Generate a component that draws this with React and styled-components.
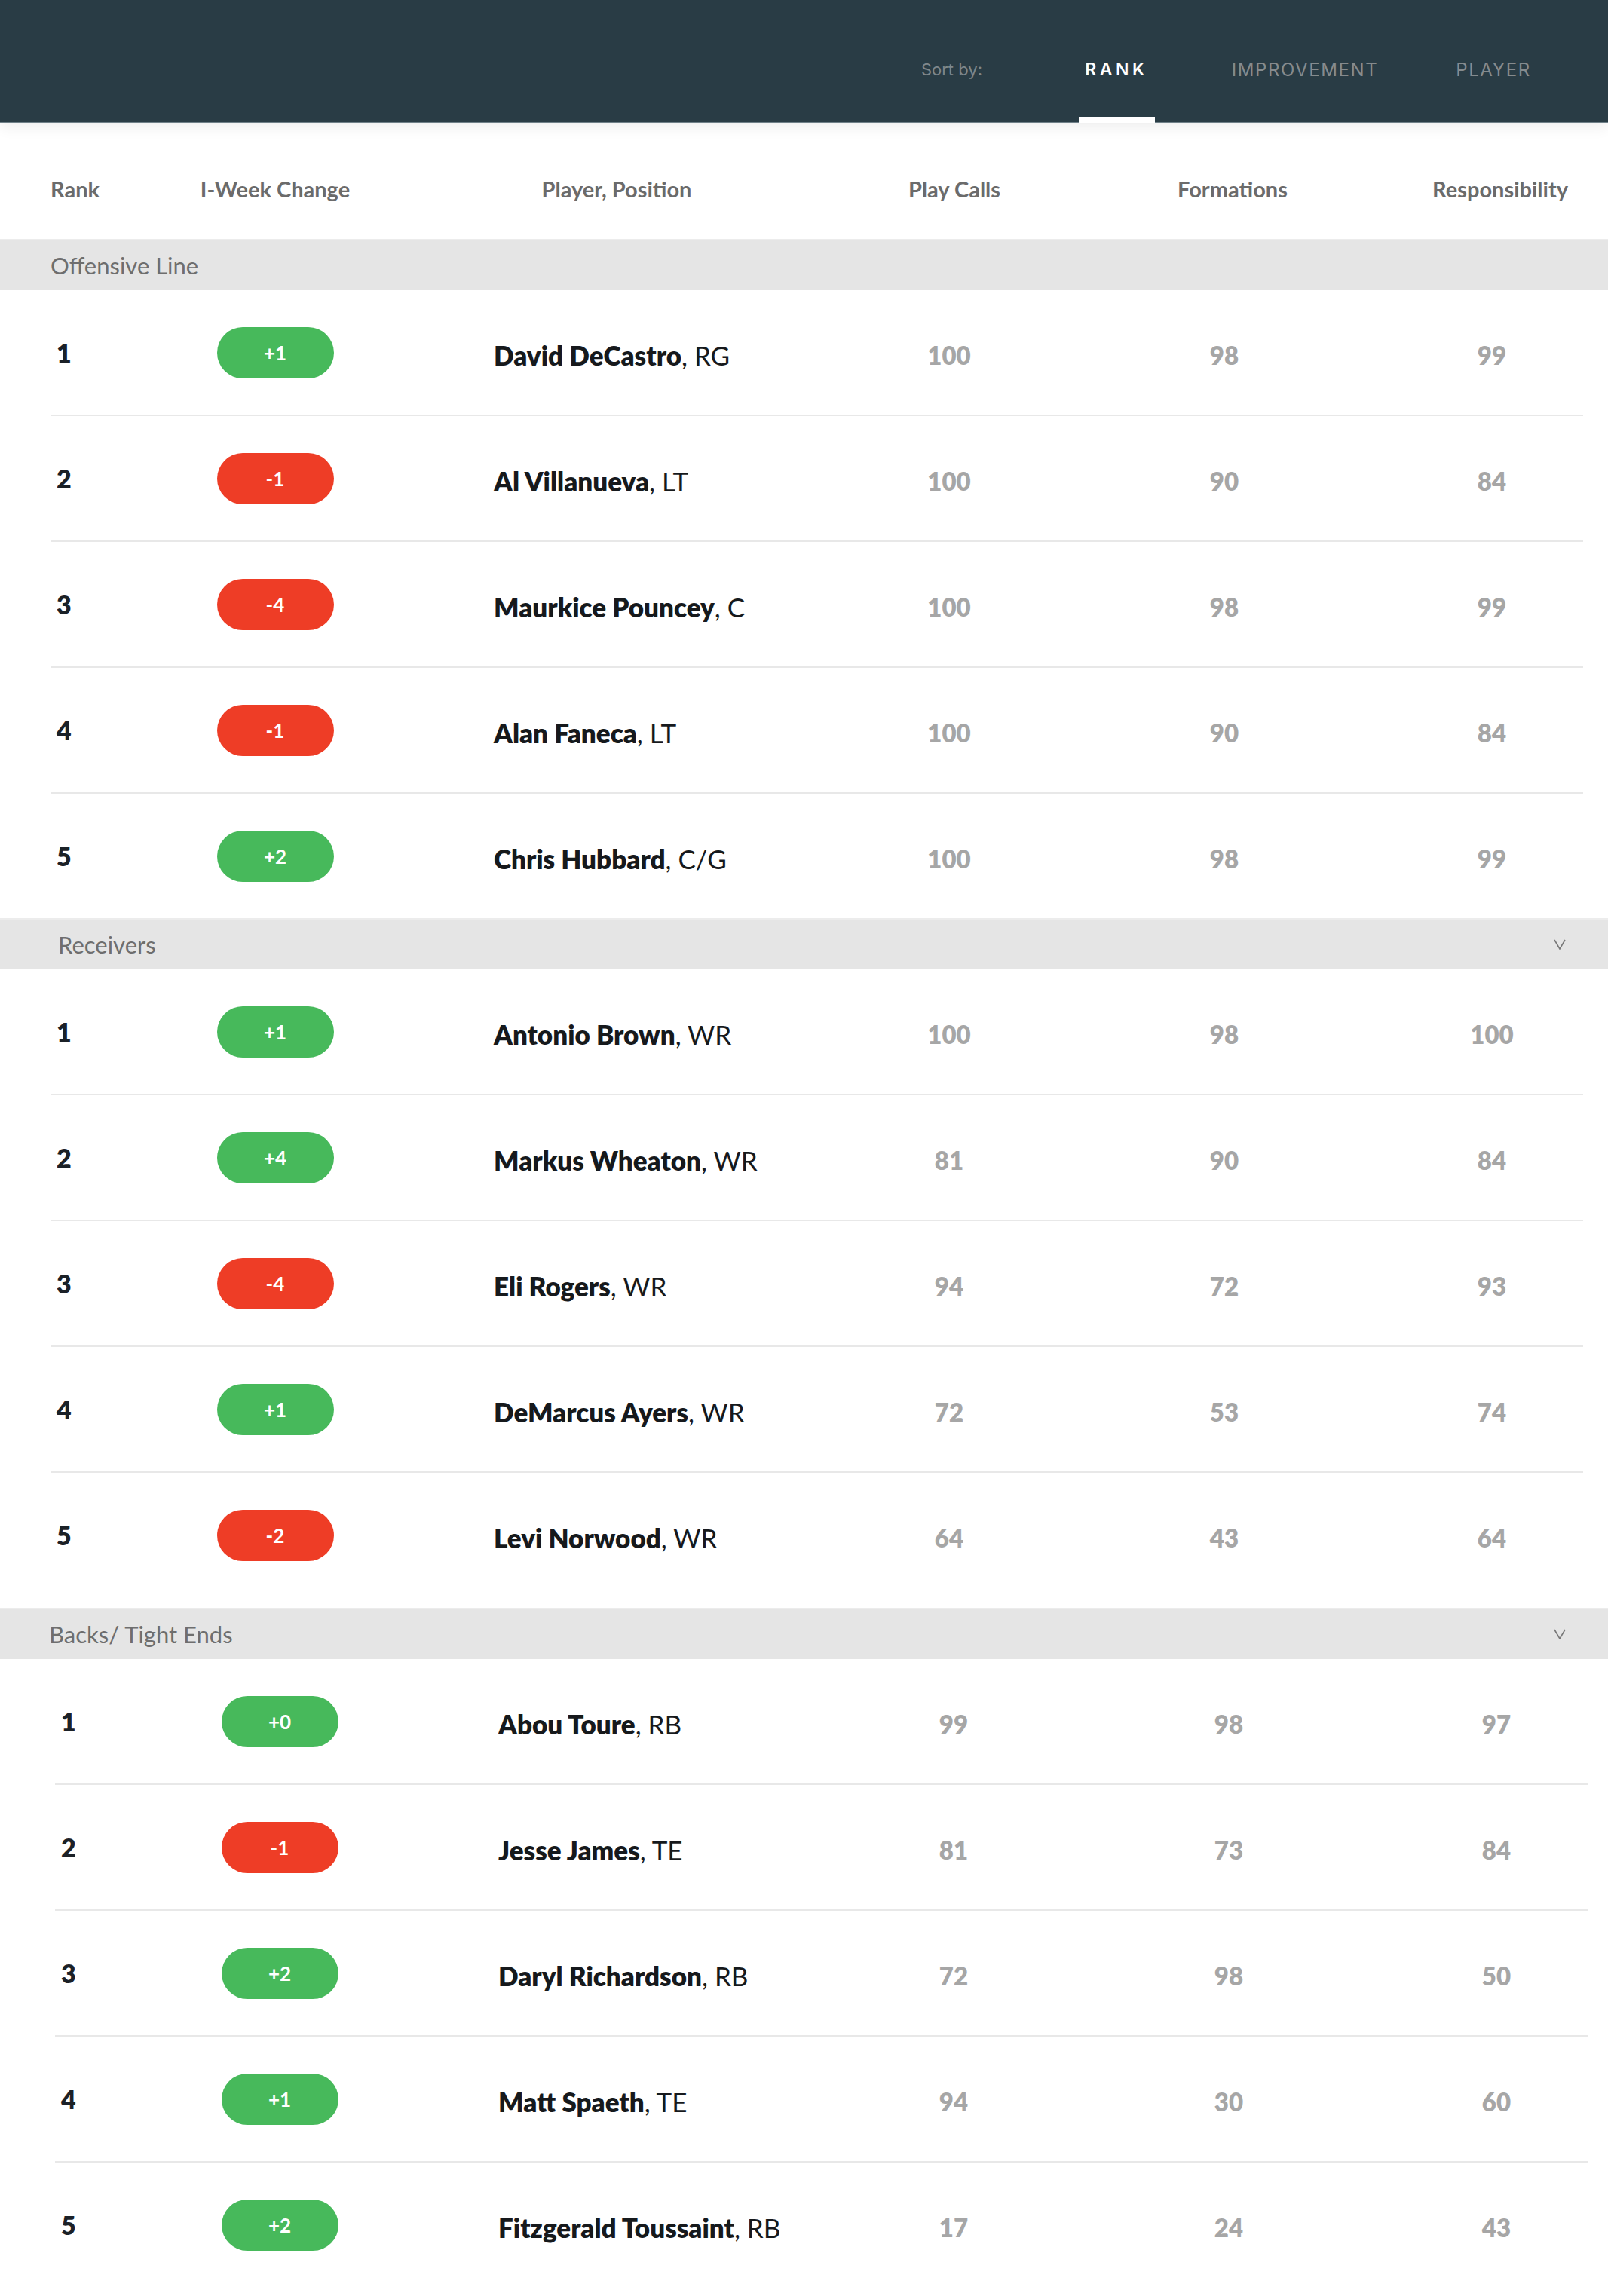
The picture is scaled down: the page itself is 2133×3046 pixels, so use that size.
import React from "react";
import styled, { createGlobalStyle } from "styled-components";

const GlobalStyle = createGlobalStyle`
  body {
    margin: 0;
    background: #fff;
    font-family: Lato, "Liberation Sans", sans-serif;
  }
`;

const TopBar = styled.header`
  position: relative;
  z-index: 2;
  height: 163px;
  background: #293c45;
  border-bottom: 1px solid #6f8088;
  box-sizing: border-box;
  box-shadow: 0 6px 18px rgba(0, 0, 0, 0.07);
  display: flex;
  justify-content: flex-end;
  align-items: stretch;
  padding-right: 27px;
  font-family: Inter, "Liberation Sans", sans-serif;
`;

const SortLabel = styled.span`
  align-self: center;
  margin-right: 53px;
  margin-top: 22px;
  font-size: 22px;
  color: #7f878b;
`;

const Tab = styled.div`
  position: relative;
  width: 250px;
  display: flex;
  align-items: center;
  justify-content: center;
  padding-top: 22px;
  box-sizing: border-box;
  font-size: ${({ active }) => (active ? "23px" : "24px")};
  letter-spacing: ${({ active }) => (active ? "4.5px" : "1.6px")};
  font-weight: ${({ active }) => (active ? 600 : 400)};
  color: ${({ active }) => (active ? "#fff" : "#858b8e")};

  &::after {
    content: "";
    display: ${({ active }) => (active ? "block" : "none")};
    position: absolute;
    bottom: -1px;
    left: 50%;
    width: 101px;
    height: 8px;
    margin-left: -50px;
    background: #fff;
  }
`;

const cols = "143px 310px 560px 358px 372px 290px";

const HeadRow = styled.div`
  display: grid;
  grid-template-columns: ${cols};
  align-items: center;
  height: 154px;
  padding-top: 20px;
  margin-left: 67px;
  box-sizing: border-box;
`;

const HeadCell = styled.div`
  font-size: 29px;
  font-weight: 700;
  color: #6b6b6b;
  white-space: nowrap;
  text-align: ${({ left }) => (left ? "left" : "center")};
  padding-left: ${({ offset }) => offset || 0}px;
`;

const Band = styled.div`
  height: 68px;
  background: #e5e5e5;
  border-top: 2px solid #ececec;
  box-sizing: border-box;
  display: flex;
  align-items: center;
  justify-content: space-between;
  padding-left: ${({ indent }) => indent}px;
  padding-right: 56px;
  font-size: 31px;
  color: #6e6e6e;
`;

const Section = styled.section`
  padding-bottom: ${({ tail }) => tail}px;
`;

const Row = styled.div`
  display: grid;
  grid-template-columns: ${cols};
  align-items: center;
  height: 165px;
  margin-left: ${({ shift }) => 67 + shift}px;
  width: 2033px;
  border-bottom: 2px solid #e8e8e8;

  &:last-child {
    border-bottom: none;
  }
`;

const RankNum = styled.div`
  padding-left: 8px;
  font-size: 34px;
  font-weight: 800;
  color: #1b2127;
`;

const ChangeCell = styled.div`
  display: flex;
  justify-content: center;
`;

const Badge = styled.span`
  width: 155px;
  height: 68px;
  border-radius: 34px;
  display: flex;
  align-items: center;
  justify-content: center;
  background: ${({ up }) => (up ? "#47b95b" : "#ee3d26")};
  color: #fff;
  font-size: 26px;
  font-weight: 700;
`;

const PlayerCell = styled.div`
  padding-left: 135px;
  padding-top: 6px;
  font-size: 35px;
  color: #16191c;
  white-space: nowrap;

  b {
    font-weight: 800;
  }
`;

const Value = styled.div`
  text-align: center;
  padding-top: 6px;
  padding-left: ${({ offset }) => offset || 0}px;
  font-size: 33px;
  font-weight: 800;
  color: #a6a6a6;
`;

const Chevron = () => (
  <svg width="16" height="14" viewBox="0 0 16 14">
    <polyline points="1,1 8,13 15,1" fill="none" stroke="#777" strokeWidth="1.6" />
  </svg>
);

const sections = [
  {
    title: "Offensive Line",
    indent: 67,
    shift: 0,
    tail: 0,
    chevron: false,
    rows: [
      [1, "+1", "David DeCastro", "RG", 100, 98, 99],
      [2, "-1", "Al Villanueva", "LT", 100, 90, 84],
      [3, "-4", "Maurkice Pouncey", "C", 100, 98, 99],
      [4, "-1", "Alan Faneca", "LT", 100, 90, 84],
      [5, "+2", "Chris Hubbard", "C/G", 100, 98, 99],
    ],
  },
  {
    title: "Receivers",
    indent: 77,
    shift: 0,
    tail: 14,
    chevron: true,
    rows: [
      [1, "+1", "Antonio Brown", "WR", 100, 98, 100],
      [2, "+4", "Markus Wheaton", "WR", 81, 90, 84],
      [3, "-4", "Eli Rogers", "WR", 94, 72, 93],
      [4, "+1", "DeMarcus Ayers", "WR", 72, 53, 74],
      [5, "-2", "Levi Norwood", "WR", 64, 43, 64],
    ],
  },
  {
    title: "Backs/ Tight Ends",
    indent: 65,
    shift: 6,
    tail: 12,
    chevron: true,
    rows: [
      [1, "+0", "Abou Toure", "RB", 99, 98, 97],
      [2, "-1", "Jesse James", "TE", 81, 73, 84],
      [3, "+2", "Daryl Richardson", "RB", 72, 98, 50],
      [4, "+1", "Matt Spaeth", "TE", 94, 30, 60],
      [5, "+2", "Fitzgerald Toussaint", "RB", 17, 24, 43],
    ],
  },
];

export default function App() {
  return (
    <>
      <GlobalStyle />
      <TopBar>
        <SortLabel>Sort by:</SortLabel>
        <Tab active>RANK</Tab>
        <Tab>IMPROVEMENT</Tab>
        <Tab>PLAYER</Tab>
      </TopBar>

      <HeadRow>
        <HeadCell left>Rank</HeadCell>
        <HeadCell>I-Week Change</HeadCell>
        <HeadCell offset={36}>Player, Position</HeadCell>
        <HeadCell offset={14}>Play Calls</HeadCell>
        <HeadCell offset={22}>Formations</HeadCell>
        <HeadCell offset={70}>Responsibility</HeadCell>
      </HeadRow>

      {sections.map((sec) => (
        <Section key={sec.title} tail={sec.tail}>
          <Band indent={sec.indent}>
            <span>{sec.title}</span>
            {sec.chevron && <Chevron />}
          </Band>
          <div>
            {sec.rows.map(([rank, change, name, pos, calls, forms, resp]) => (
              <Row key={rank} shift={sec.shift}>
                <RankNum>{rank}</RankNum>
                <ChangeCell>
                  <Badge up={change.startsWith("+")}>{change}</Badge>
                </ChangeCell>
                <PlayerCell>
                  <b>{name}</b>, {pos}
                </PlayerCell>
                <Value>{calls}</Value>
                <Value>{forms}</Value>
                <Value offset={48}>{resp}</Value>
              </Row>
            ))}
          </div>
        </Section>
      ))}
    </>
  );
}
